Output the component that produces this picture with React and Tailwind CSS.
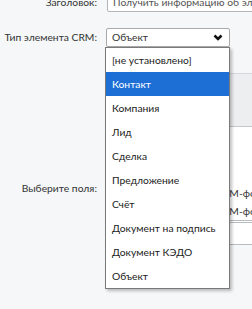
const items = [
  "[не установлено]",
  "Контакт",
  "Компания",
  "Лид",
  "Сделка",
  "Предложение",
  "Счёт",
  "Документ на подпись",
  "Документ КЭДО",
  "Объект",
];

export default function App() {
  return (
    <div
      className="h-[309px] w-[252px] overflow-hidden bg-[#f5f7f8] text-[10.3px] text-[#333] whitespace-nowrap"
      style={{ fontFamily: 'Lato, "Noto Sans", sans-serif' }}
    >
      {/* title row */}
      <div className="mt-[-8px] flex items-center">
        <div className="w-[97px] shrink-0 text-right leading-[20px]">Заголовок:</div>
        <div className="ml-[10px] h-[20px] w-[200px] shrink-0 rounded-[2px] border border-[#b5b5b5] bg-white px-[5px] leading-[18px] text-[#555]">
          Получить информацию об элементе
        </div>
      </div>

      {/* crm type row */}
      <div className="mt-[16px] flex items-center">
        <div className="w-[97px] shrink-0 text-right">Тип элемента CRM:</div>
        <div className="relative ml-[9px] shrink-0">
          <div className="flex h-[19px] w-[124px] items-center justify-between rounded-[2px] border border-[#a9a9a9] bg-white pl-[5px] pr-[6px]">
            <span>Объект</span>
            <svg width="10" height="7" viewBox="0 0 10 7">
              <polyline points="1.5,1.5 5,5 8.5,1.5" fill="none" stroke="#111" strokeWidth="2.5" />
            </svg>
          </div>

          {/* open list */}
          <div className="absolute left-[-1px] top-[19px] z-10 w-[125px] border border-[#7a7a7a] bg-white shadow-[2px_2px_3px_rgba(0,0,0,0.25)]">
            {items.map((it, i) => (
              <div
                key={it}
                className={
                  i === 1
                    ? "h-[24px] bg-[#1d6fd6] pl-[6px] leading-[24px] text-white"
                    : "h-[24px] pl-[6px] leading-[24px] text-[#222]"
                }
              >
                {it}
              </div>
            ))}
          </div>
        </div>
      </div>

      {/* fields row */}
      <div className="mt-[26px] flex">
        <div className="w-[97px] shrink-0 pt-[108px] text-right">Выберите поля:</div>
        <div className="ml-[8px] w-[200px] shrink-0 border-t border-[#d4d8db]">
          <div className="h-[53px] border-b border-[#c4c8cb] bg-[#eceef0]" />
          <div className="h-[93px] bg-white pl-[111px] pt-[57px] leading-[18px]">
            <div>CRM-форма</div>
            <div>CRM-форма</div>
          </div>
          <div className="h-[24px] border-t-[3px] border-double border-[#b8bcbf] bg-white" />
          <div className="border-t border-[#b8bcbf]" />
        </div>
      </div>
    </div>
  );
}
